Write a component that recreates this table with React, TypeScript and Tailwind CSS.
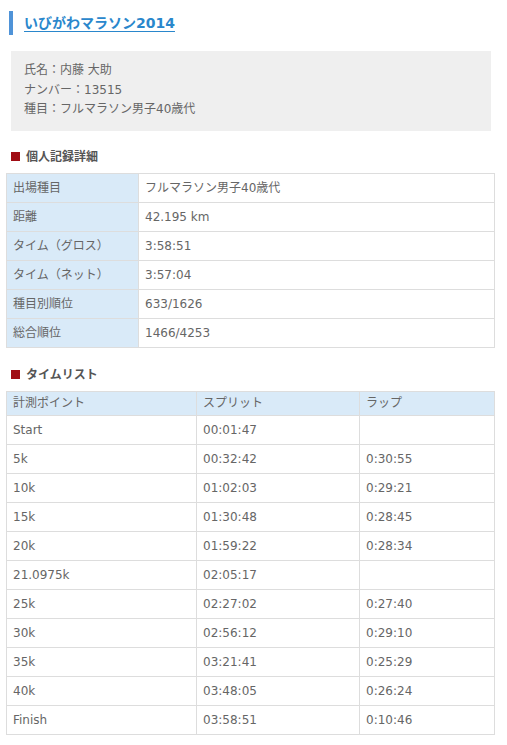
import React from "react";

const font = { fontFamily: '"DejaVu Sans", "Noto Sans CJK JP", sans-serif' };

const details: [string, string][] = [
  ["出場種目", "フルマラソン男子40歳代"],
  ["距離", "42.195 km"],
  ["タイム（グロス）", "3:58:51"],
  ["タイム（ネット）", "3:57:04"],
  ["種目別順位", "633/1626"],
  ["総合順位", "1466/4253"],
];

const splits: [string, string, string][] = [
  ["Start", "00:01:47", ""],
  ["5k", "00:32:42", "0:30:55"],
  ["10k", "01:02:03", "0:29:21"],
  ["15k", "01:30:48", "0:28:45"],
  ["20k", "01:59:22", "0:28:34"],
  ["21.0975k", "02:05:17", ""],
  ["25k", "02:27:02", "0:27:40"],
  ["30k", "02:56:12", "0:29:10"],
  ["35k", "03:21:41", "0:25:29"],
  ["40k", "03:48:05", "0:26:24"],
  ["Finish", "03:58:51", "0:10:46"],
];

const SectionHead = ({ children }: { children: React.ReactNode }) => (
  <div className="flex items-center ml-[5px] h-[18px]">
    <span className="w-[9px] h-[9px] bg-[#a00d14] mr-[6px]" />
    <span className="text-[12px] font-bold text-[#555]">{children}</span>
  </div>
);

const cell = "border border-[#dddddd] px-[6px] text-left font-normal align-middle";

const App = () => {
  return (
    <div className="bg-white min-h-screen px-[6px] pt-[11px] pb-[10px] text-[#555]" style={font}>
      <div className="ml-[3px] border-l-4 border-[#4f93d8] pl-[11px] h-[24px] flex items-center">
        <span className="text-[14px] font-bold text-[#2a87cc] underline underline-offset-[3px] leading-none">
          いびがわマラソン2014
        </span>
      </div>

      <div className="ml-[5px] w-[480px] mt-[16px] bg-[#efefef] pl-[13px] pt-[10px] pb-[11px] text-[12px] leading-[19.5px] text-[#666]">
        <div>氏名：内藤 大助</div>
        <div>ナンバー：13515</div>
        <div>種目：フルマラソン男子40歳代</div>
      </div>

      <div className="mt-[17px]">
        <SectionHead>個人記録詳細</SectionHead>
      </div>

      <table className="mt-[7px] w-[489px] border-collapse text-[12px] text-[#666] table-fixed">
        <colgroup>
          <col className="w-[132px]" />
          <col />
        </colgroup>
        <tbody>
          {details.map(([k, v]) => (
            <tr key={k} className="h-[29px]">
              <th className={`${cell} bg-[#d9eaf8]`}>{k}</th>
              <td className={cell}>{v}</td>
            </tr>
          ))}
        </tbody>
      </table>

      <div className="mt-[18px]">
        <SectionHead>タイムリスト</SectionHead>
      </div>

      <table className="mt-[7px] w-[489px] border-collapse text-[12px] text-[#666] table-fixed">
        <colgroup>
          <col className="w-[190px]" />
          <col className="w-[163px]" />
          <col />
        </colgroup>
        <thead>
          <tr className="h-[24px] bg-[#d9eaf8]">
            <th className={cell}>計測ポイント</th>
            <th className={cell}>スプリット</th>
            <th className={cell}>ラップ</th>
          </tr>
        </thead>
        <tbody>
          {splits.map(([p, s, l]) => (
            <tr key={p} className="h-[29px]">
              <td className={cell}>{p}</td>
              <td className={cell}>{s}</td>
              <td className={cell}>{l}</td>
            </tr>
          ))}
        </tbody>
      </table>
    </div>
  );
};

export default App;
